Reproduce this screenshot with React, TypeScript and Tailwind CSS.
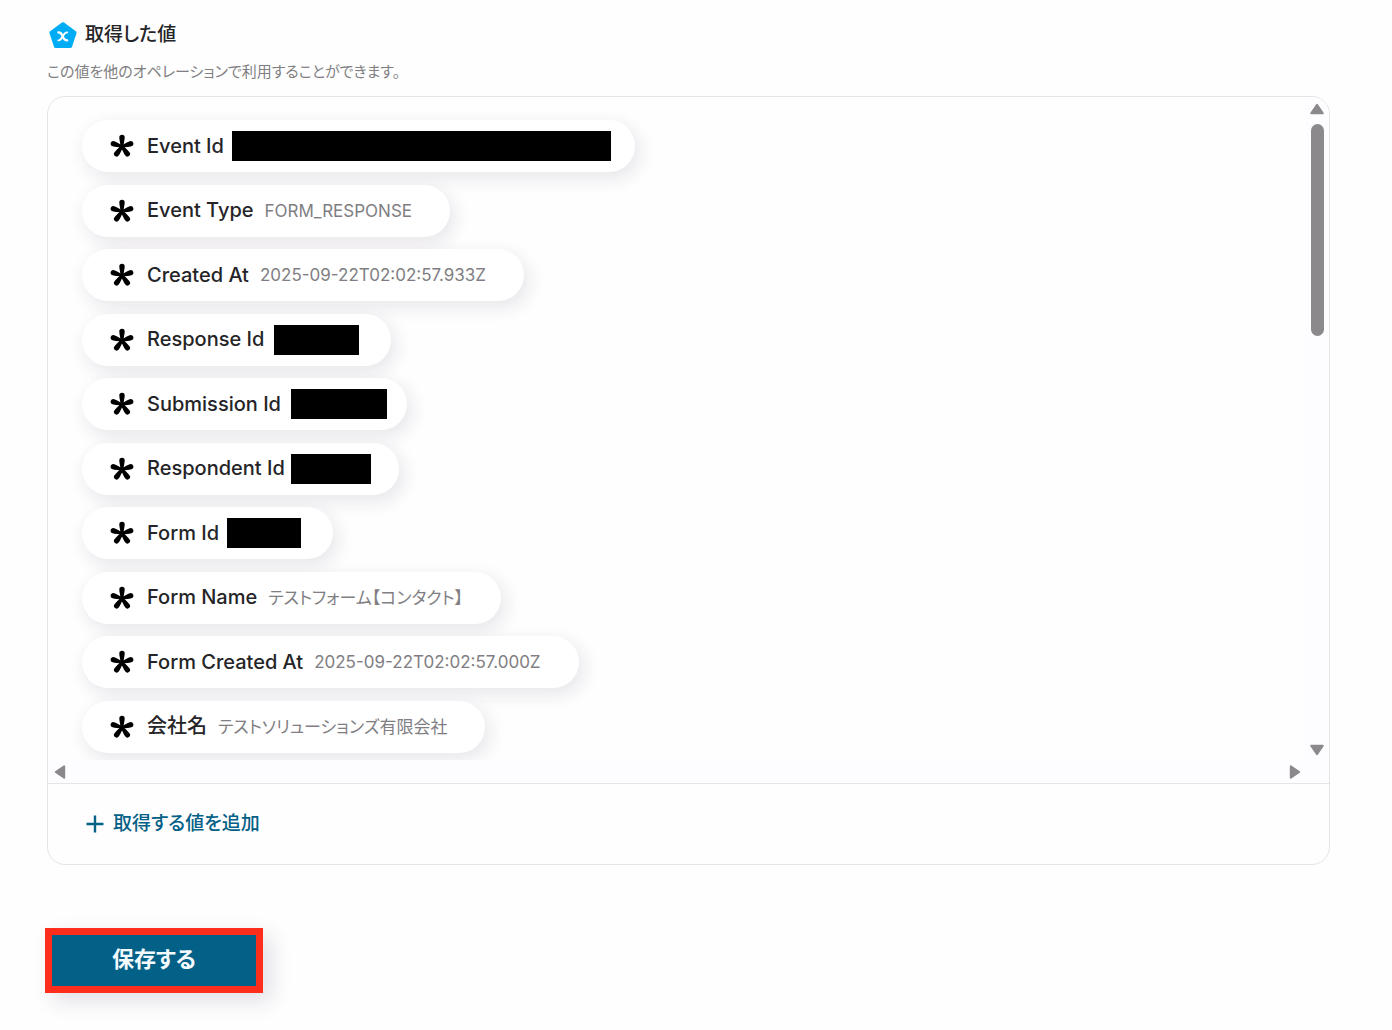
type Item = {
  label: string;
  value?: string;
  mask?: string;
};

const items: Item[] = [
  { label: 'Event Id', mask: 'w-[379px] ml-2 mr-6' },
  { label: 'Event Type', value: 'FORM_RESPONSE' },
  { label: 'Created At', value: '2025-09-22T02:02:57.933Z' },
  { label: 'Response Id', mask: 'w-[85px] ml-2.5 mr-8' },
  { label: 'Submission Id', mask: 'w-[96px] ml-2.5 mr-5' },
  { label: 'Respondent Id', mask: 'w-[80px] ml-1.5 mr-7' },
  { label: 'Form Id', mask: 'w-[74px] ml-2 mr-8' },
  { label: 'Form Name', value: 'テストフォーム【コンタクト】' },
  { label: 'Form Created At', value: '2025-09-22T02:02:57.000Z' },
  { label: '会社名', value: 'テストソリューションズ有限会社' },
];

function PentagonIcon() {
  return (
    <svg width="28" height="28" viewBox="0 0 28 28" aria-hidden="true">
      <path
        d="M14 3 25.8 11.6 21.3 25.2H6.7L2.2 11.6Z"
        fill="#00adf5"
        stroke="#00adf5"
        strokeWidth="3.6"
        strokeLinejoin="round"
      />
      <path
        d="M9.4 11.4c2.3 0 3.2.9 4.2 3.7s1.8 4.3 4.6 4.3"
        fill="none"
        stroke="#fff"
        strokeWidth="2.3"
        strokeLinecap="round"
      />
      <path
        d="M18.2 11.4c-1.9 0-3.100 1.500-4.400 3.900s-2.500 4.100-4.400 4.100"
        fill="none"
        stroke="#fff"
        strokeWidth="1.9"
        strokeLinecap="round"
      />
    </svg>
  );
}

function AsteriskIcon() {
  return (
    <svg width="24" height="24" viewBox="0 0 24 24" className="shrink-0" aria-hidden="true">
      {[0, 72, 144, 216, 288].map((deg) => (
        <path
          key={deg}
          d="M10.6 13C10.4 9 9.3 6 9.3 3.5a2.7 2.8 0 0 1 5.4 0C14.700 6 13.600 9 13.400 13Z"
          transform={`rotate(${deg} 12 12.5)`}
        />
      ))}
    </svg>
  );
}

function Arrow({ turn }: { turn: string }) {
  return (
    <svg width="16" height="12" viewBox="0 0 16 12" className={`shrink-0 ${turn}`} aria-hidden="true">
      <path
        d="M8 1.8 13.8 10.2H2.2Z"
        fill="#8b898c"
        stroke="#8b898c"
        strokeWidth="2"
        strokeLinejoin="round"
      />
    </svg>
  );
}

function Chip({ label, value, mask }: Item) {
  return (
    <li className="flex h-[52px] w-fit items-center rounded-full bg-white pl-7 whitespace-nowrap shadow-[4px_6px_16px_2px_rgba(60,40,80,0.1)]">
      <AsteriskIcon />
      <span className="ml-[13px] pb-px text-[20px] leading-7 font-medium text-[#252427]">{label}</span>
      {mask ? (
        <span className={`h-[30px] bg-black ${mask}`} />
      ) : (
        <span className="mr-[38px] ml-[11px] text-[17px] leading-7 text-[#807e82]">{value}</span>
      )}
    </li>
  );
}

export default function App() {
  return (
    <main className="min-h-screen bg-[#fefefe] pt-[21px] pr-[62px] pb-9 pl-[47px] font-[Inter,'Noto_Sans_CJK_JP',sans-serif] [font-feature-settings:'palt']">
      <header>
        <h1 className="flex items-center gap-2 pl-0.5 text-[19px] leading-7 font-medium text-[#252427]">
          <PentagonIcon />
          取得した値
        </h1>
        <p className="mt-[11px] text-[15px] leading-6 text-[#807e82]">
          この値を他のオペレーションで利用することができます。
        </p>
      </header>

      <section className="mt-3 overflow-hidden rounded-[18px] border border-[#e6e4e8]">
        <div className="flex">
          <div className="min-w-0 flex-1 overflow-hidden pt-[23px] pb-[7px] pl-[34px]">
            <ul className="flex h-[633px] flex-col justify-between">
              {items.map((item) => (
                <Chip key={item.label} {...item} />
              ))}
            </ul>
          </div>
          <div className="flex w-6 flex-col items-center bg-[#fdfcfe] pt-1.5 pb-1">
            <Arrow turn="rotate-0" />
            <div className="mt-[9px] h-[212px] w-[13px] rounded-full bg-[#8b898c]" />
            <div className="flex-1" />
            <Arrow turn="rotate-180" />
          </div>
        </div>
        <div className="flex h-[23px] items-center justify-between bg-[#fdfcfe] pr-[26px] pl-1">
          <Arrow turn="-rotate-90" />
          <Arrow turn="rotate-90" />
        </div>
        <div className="border-t border-[#e6e4e8] px-[37px] py-[26px]">
          <button type="button" className="flex items-center gap-2 text-[19px] leading-7 font-medium text-[#036086]">
            <svg width="20" height="20" viewBox="0 0 20 20" aria-hidden="true">
              <path d="M10 1.5v17M1.5 10h17" stroke="currentColor" strokeWidth="2.4" />
            </svg>
            取得する値を追加
          </button>
        </div>
      </section>

      <button
        type="button"
        className="mt-[63px] -ml-0.5 h-[65px] w-[218px] border-[7px] border-[#ff2d1c] bg-[#036086] pb-1 text-[22px] leading-8 font-bold text-[#f4fbff] shadow-[8px_8px_20px_rgba(40,40,90,0.14)]"
      >
        保存する
      </button>
    </main>
  );
}
